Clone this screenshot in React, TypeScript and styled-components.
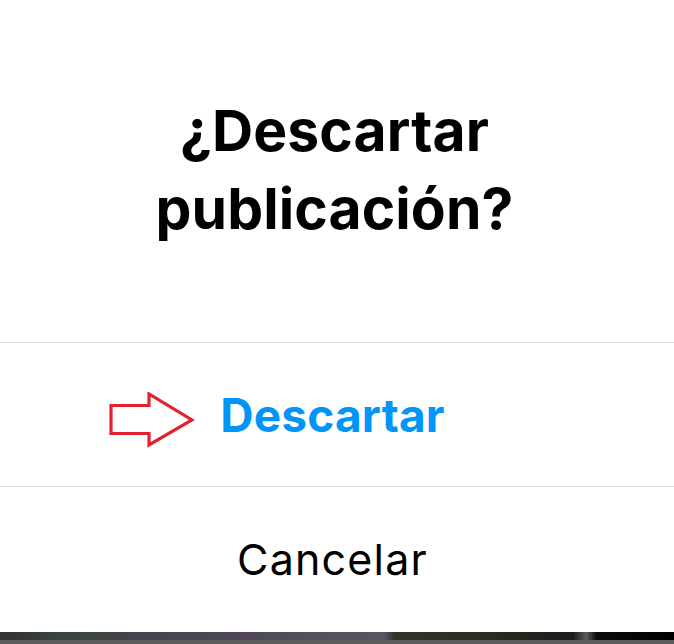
import styled, { createGlobalStyle } from 'styled-components';

const GlobalStyle = createGlobalStyle`
  html, body {
    margin: 0;
    padding: 0;
    background: #ffffff;
  }
  body {
    font-family: Inter, 'Noto Sans', sans-serif;
    -webkit-font-smoothing: antialiased;
  }
`;

const Screen = styled.div`
  width: 674px;
  height: 644px;
  display: flex;
  flex-direction: column;
  background: #ffffff;
  overflow: hidden;
`;

const Sheet = styled.div`
  flex: 1;
  display: flex;
  flex-direction: column;
`;

const Header = styled.div`
  height: 342px;
  display: flex;
  align-items: center;
  justify-content: center;
  padding-right: 5px;
  border-bottom: 1px solid #dbdbdb;
`;

const Title = styled.h1`
  margin: 0;
  padding-bottom: 3px;
  text-align: center;
  font-size: 57px;
  line-height: 78px;
  font-weight: 700;
  color: #000000;
  letter-spacing: 0.1px;
`;

const Action = styled.button<{ $primary?: boolean }>`
  position: relative;
  height: 144px;
  display: flex;
  align-items: center;
  justify-content: center;
  border: 0;
  border-bottom: ${({ $primary }) => ($primary ? '1px solid #dbdbdb' : '0')};
  background: transparent;
  padding: 0 9px 0 0;
  font-family: inherit;
  font-size: ${({ $primary }) => ($primary ? '46px' : '43px')};
  font-weight: ${({ $primary }) => ($primary ? 700 : 400)};
  letter-spacing: ${({ $primary }) => ($primary ? '0.2px' : '1.2px')};
  color: ${({ $primary }) => ($primary ? '#0095f6' : '#000000')};
  cursor: pointer;
`;

const Label = styled.span`
  position: relative;
`;

const Pointer = styled.svg`
  position: absolute;
  right: calc(100% + 25px);
  top: 50%;
  transform: translateY(-50%);
  margin-top: 5px;
`;

const NavStrip = styled.div`
  height: 8px;
  background: linear-gradient(
    90deg,
    #2f3331 0%,
    #3d4442 10%,
    #454650 25%,
    #4f4659 35%,
    #555259 48%,
    #575660 57%,
    #34342a 58.5%,
    #2c2c24 72%,
    #1c1c1a 85%,
    #5c5c5c 87%,
    #0a0a0a 88.5%,
    #000000 100%
  );
`;

const NavBase = styled.div`
  height: 4px;
  background: #5b5b5b;
`;

function Arrow() {
  return (
    <Pointer width="86" height="56" viewBox="0 0 86 56">
      <path
        d="M2 13.5 H40 V2 L83 28 L40 53 V41.5 H2 Z"
        fill="none"
        stroke="#e3202b"
        strokeWidth="3.2"
        strokeLinejoin="miter"
      />
    </Pointer>
  );
}

export default function App() {
  return (
    <>
      <GlobalStyle />
      <Screen>
        <Sheet>
          <Header>
            <Title>
              ¿Descartar
              <br />
              publicación?
            </Title>
          </Header>
          <Action $primary>
            <Label>
              <Arrow />
              Descartar
            </Label>
          </Action>
          <Action>
            <Label>Cancelar</Label>
          </Action>
        </Sheet>
        <NavStrip />
        <NavBase />
      </Screen>
    </>
  );
}
